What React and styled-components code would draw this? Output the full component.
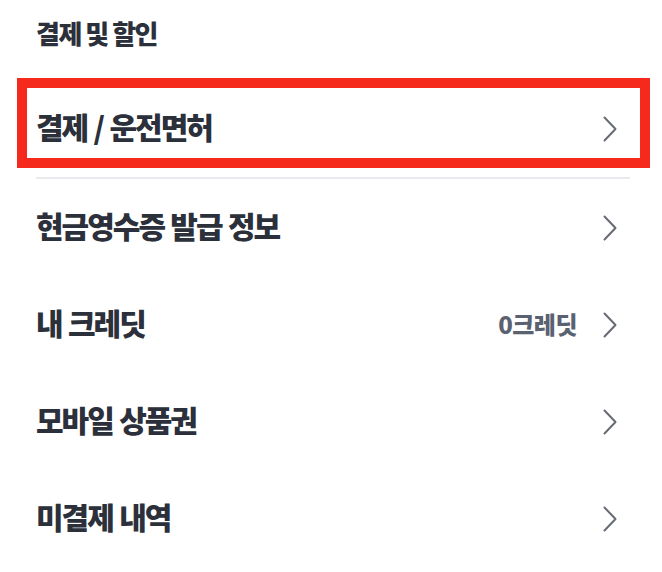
import React from 'react';
import styled, { createGlobalStyle } from 'styled-components';

const GlobalStyle = createGlobalStyle`
  html, body {
    margin: 0;
    padding: 0;
    background: #fff;
  }
  body {
    font-family: "Noto Sans CJK KR", "Noto Sans", sans-serif;
    color: #2b303b;
  }
`;

const Page = styled.div`
  width: 662px;
  height: 572px;
  box-sizing: border-box;
  padding: 0 32px 0 36px;
  overflow: hidden;
`;

const SectionTitle = styled.h2`
  margin: 0;
  height: 80px;
  box-sizing: border-box;
  padding-top: 17px;
  font-size: 26px;
  line-height: 32px;
  font-weight: 900;
  letter-spacing: -1.5px;
  color: #2b303b;
`;

const Row = styled.a`
  position: relative;
  display: flex;
  align-items: center;
  justify-content: space-between;
  height: 97px;
  padding-right: 13px;
  text-decoration: none;
  color: inherit;

  ${({ $highlighted }) =>
    $highlighted &&
    `
    &::after {
      content: '';
      position: absolute;
      top: -2px;
      bottom: 9px;
      left: -19px;
      right: -20px;
      border: 10px solid #f6291d;
      pointer-events: none;
    }
  `}
`;

const Label = styled.span`
  margin-bottom: 5px;
  font-size: 30px;
  font-weight: 900;
  letter-spacing: -2px;
  word-spacing: 1.5px;
  color: #2b303b;
`;

const Trailing = styled.span`
  display: flex;
  align-items: center;
  gap: 26px;
`;

const Value = styled.span`
  margin-bottom: 3px;
  font-size: 24px;
  font-weight: 900;
  letter-spacing: -0.5px;
  color: #5a6170;
`;

const Divider = styled.div`
  height: 2px;
  background: #e9eaee;
`;

const Chevron = () => (
  <svg width="14" height="26" viewBox="0 0 14 26" fill="none">
    <path d="M1.5 1.5 L12.5 13 L1.5 24.5" stroke="#676b74" strokeWidth="2" strokeLinecap="round" strokeLinejoin="round" />
  </svg>
);

const items = [
  { label: '현금영수증 발급 정보' },
  { label: '내 크레딧', value: '0크레딧' },
  { label: '모바일 상품권' },
  { label: '미결제 내역' },
];

const MenuRow = ({ label, value, highlighted }) => (
  <Row href="#" $highlighted={highlighted}>
    <Label>{label}</Label>
    <Trailing>
      {value && <Value>{value}</Value>}
      <Chevron />
    </Trailing>
  </Row>
);

export default function App() {
  return (
    <>
      <GlobalStyle />
      <Page>
        <SectionTitle>결제 및 할인</SectionTitle>
        <MenuRow label="결제 / 운전면허" highlighted />
        <Divider />
        {items.map((item) => (
          <MenuRow key={item.label} {...item} />
        ))}
      </Page>
    </>
  );
}
